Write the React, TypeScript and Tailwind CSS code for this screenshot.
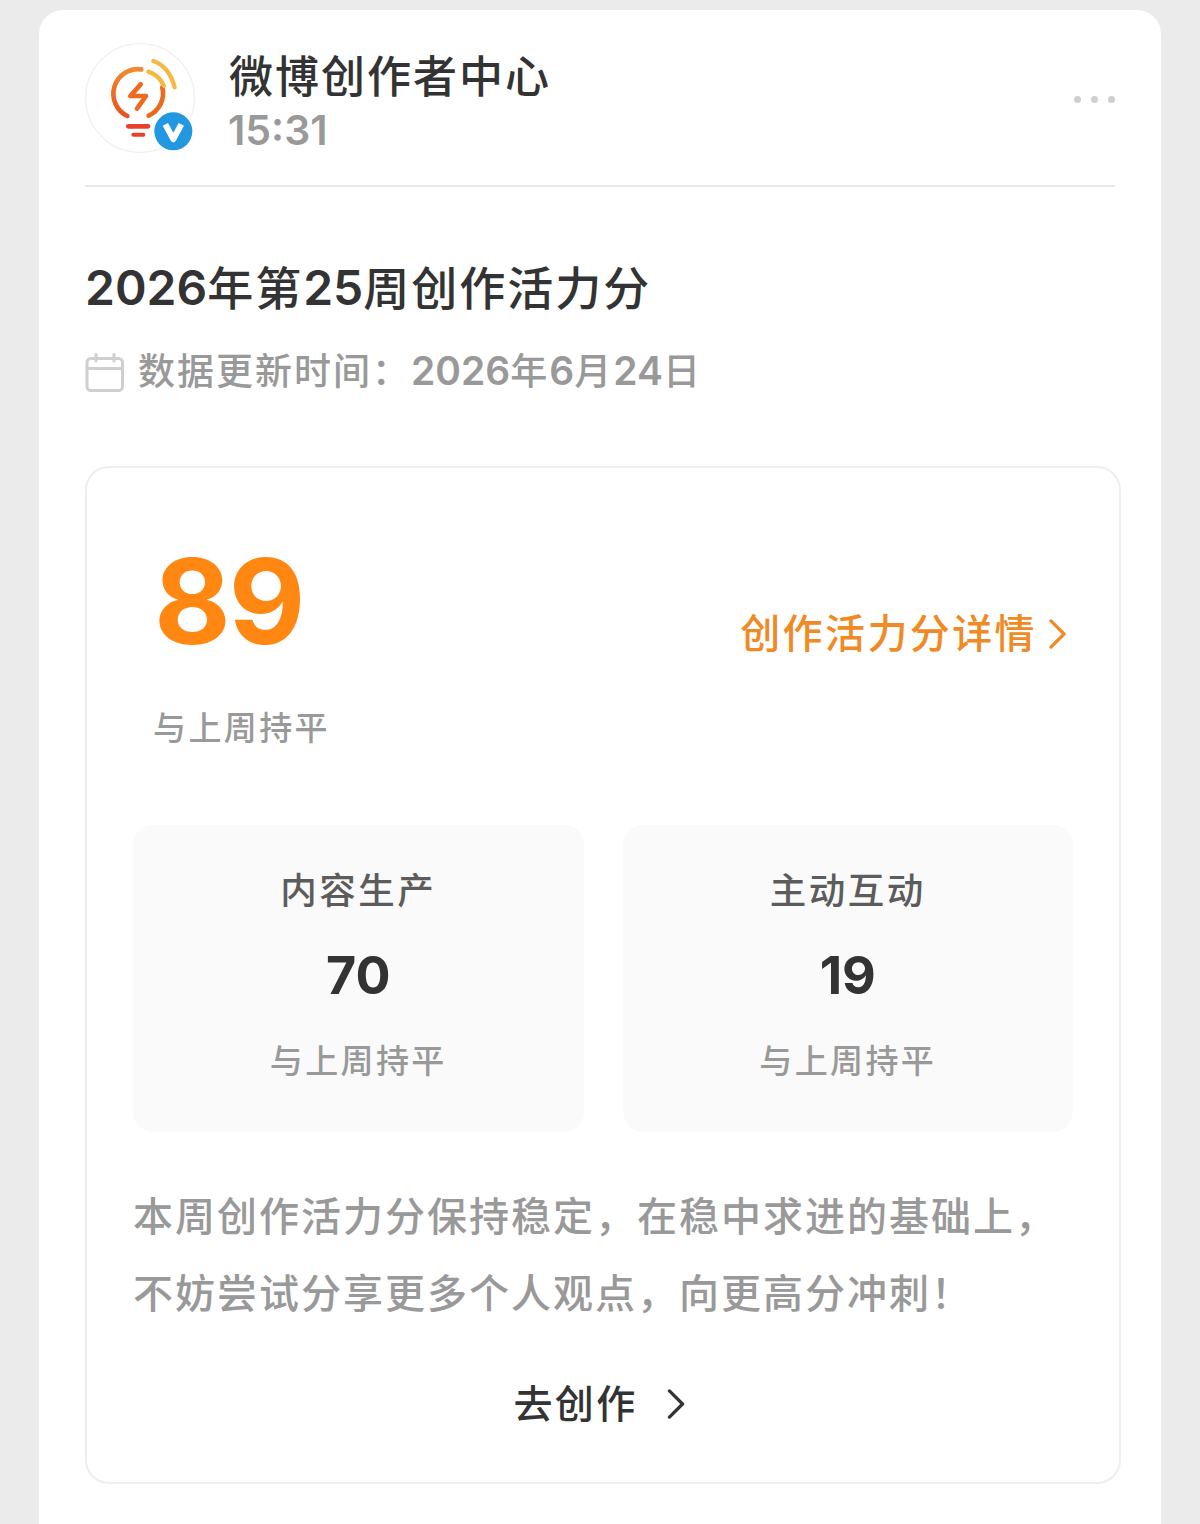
const CJK = "font-['Inter','Noto_Sans_CJK_SC',sans-serif]";

const Logo = () => (
	<svg className="h-[110px] w-[110px] shrink-0" viewBox="45 39 330 330" fill="none">
		<defs>
			<linearGradient id="bulb" x1="0" y1="0" x2="0" y2="1">
				<stop offset="0" stopColor="#f08a2c" />
				<stop offset="1" stopColor="#e8531f" />
			</linearGradient>
		</defs>
		<circle cx="210" cy="204" r="163" fill="#fff" stroke="#f0f0f0" strokeWidth="4" />
		<path d="M214 118A74 74 0 0 0 172 258" stroke="url(#bulb)" strokeWidth="14" strokeLinecap="round" />
		<path d="M236 257A74 74 0 0 0 277 172" stroke="#ea6a22" strokeWidth="14" strokeLinecap="round" />
		<path d="M235 125Q268 136 282 168" stroke="#f5b942" strokeWidth="13" strokeLinecap="round" />
		<path d="M250 93Q298 110 314 172" stroke="#f5b942" strokeWidth="13" strokeLinecap="round" />
		<path d="M212 163L181 198H228L201 236" stroke="#ee6a20" strokeWidth="14" strokeLinecap="round" strokeLinejoin="round" />
		<path d="M175 289H234" stroke="#e8402a" strokeWidth="14" strokeLinecap="round" />
		<path d="M190 314H220" stroke="#e8402a" strokeWidth="12" strokeLinecap="round" />
		<circle cx="310" cy="304" r="57" fill="#2298e0" />
		<path d="M286 283L310 327L334 283" stroke="#fff" strokeWidth="18" strokeLinejoin="round" />
	</svg>
);

const CalendarIcon = () => (
	<svg className="h-[40px] w-[40px] shrink-0" viewBox="0 0 40 40" fill="none" stroke="#cfcfcf" strokeWidth="3">
		<rect x="2" y="5.5" width="35.5" height="32" rx="4" />
		<path d="M2 15.5H37.5M11 1.5V8M29 1.5V8" strokeLinecap="round" />
	</svg>
);

const Chevron = ({ className }: { className: string }) => (
	<svg className={className} viewBox="0 0 18 32" fill="none" stroke="currentColor" strokeWidth="3.4" strokeLinecap="round" strokeLinejoin="round">
		<path d="M2 2L16 16L2 30" />
	</svg>
);

const StatBox = ({ title, value }: { title: string; value: string }) => (
	<div className="flex h-[307px] flex-col items-center rounded-[20px] bg-[#fafafa] pt-[39px]">
		<div className="h-[54px] text-[36.5px] font-medium leading-[54px] tracking-[2.5px] text-[#5c5c5c]">{title}</div>
		<div className="mt-[25px] h-[66px] text-[52px] font-bold leading-[66px] text-[#333]">{value}</div>
		<div className="mt-[27px] h-[50px] text-[33px] font-medium leading-[50px] tracking-[2.4px] text-[#999]">与上周持平</div>
	</div>
);

export default function App() {
	return (
		<div className={`h-[1524px] overflow-hidden bg-[#ebebeb] pt-[10px] ${CJK}`}>
			<div className="mx-[39px] h-[1560px] rounded-[24px] bg-white px-[46px] pt-[33px]">
				<div className="flex items-center border-b-2 border-[#e8e8e8] pb-[32px]">
					<Logo />
					<div className="ml-[34px] flex-1">
						<div className="h-[66px] text-[44px] font-medium leading-[66px] tracking-[2px] text-[#333]">微博创作者中心</div>
						<div className="-ml-px -mt-[2px] h-[44px] text-[41px] font-semibold leading-[44px] text-[#999]">15:31</div>
					</div>
					<div className="mt-[2px] flex gap-[10px]">
						<span className="h-[7px] w-[7px] rounded-full bg-[#cfcfcf]" />
						<span className="h-[7px] w-[7px] rounded-full bg-[#cfcfcf]" />
						<span className="h-[7px] w-[7px] rounded-full bg-[#cfcfcf]" />
					</div>
				</div>

				<h1 className="mt-[66px] h-[70px] text-[46px] font-medium leading-[70px] tracking-[2px] text-[#333]">
					<span className="text-[48px] font-semibold tracking-normal">2026</span>年第<span className="text-[48px] font-semibold tracking-normal">25</span>周创作活力分
				</h1>
				<div className="mt-[20px] flex h-[56px] items-center text-[37px] font-medium tracking-[2px] text-[#999]">
					<span className="mt-[4px]">
						<CalendarIcon />
					</span>
					<span className="ml-[13px]">
						数据更新时间：<span className="text-[39px] font-semibold tracking-normal">2026</span>年<span className="text-[39px] font-semibold tracking-normal">6</span>月<span className="text-[39px] font-semibold tracking-normal">24</span>日
					</span>
				</div>

				<div className="mt-[67px] h-[1018px] w-[1036px] rounded-[24px] border-2 border-[#eeeeee] px-[46px]">
					<div className="flex items-start justify-between">
						<div className="ml-[21px] mt-[58px] h-[150px] text-[118px] font-bold leading-[150px] tracking-[-2px] text-[#ff8712]">89</div>
						<div className="mr-[7px] mt-[136px] flex items-center text-[40px] font-medium leading-[60px] tracking-[2.4px] text-[#f08a24]">
							创作活力分详情
							<Chevron className="ml-[12px] h-[30px] w-[17px]" />
						</div>
					</div>
					<div className="ml-[20px] mt-[27px] h-[50px] text-[33px] font-medium leading-[50px] tracking-[2.4px] text-[#999]">与上周持平</div>

					<div className="mt-[72px] grid grid-cols-2 gap-[39px]">
						<StatBox title="内容生产" value="70" />
						<StatBox title="主动互动" value="19" />
					</div>

					<p className="mt-[46px] text-[40px] font-medium leading-[77px] tracking-[2px] text-[#999]">
						本周创作活力分保持稳定，在稳中求进的基础上，
						<br />
						不妨尝试分享更多个人观点，向更高分冲刺！
					</p>

					<div className="mt-[42px] flex items-center justify-center pr-[8px] text-[39px] font-medium leading-[60px] tracking-[2.4px] text-[#333]">
						去创作
						<Chevron className="ml-[29px] h-[30px] w-[18px]" />
					</div>
				</div>
			</div>
		</div>
	);
}
